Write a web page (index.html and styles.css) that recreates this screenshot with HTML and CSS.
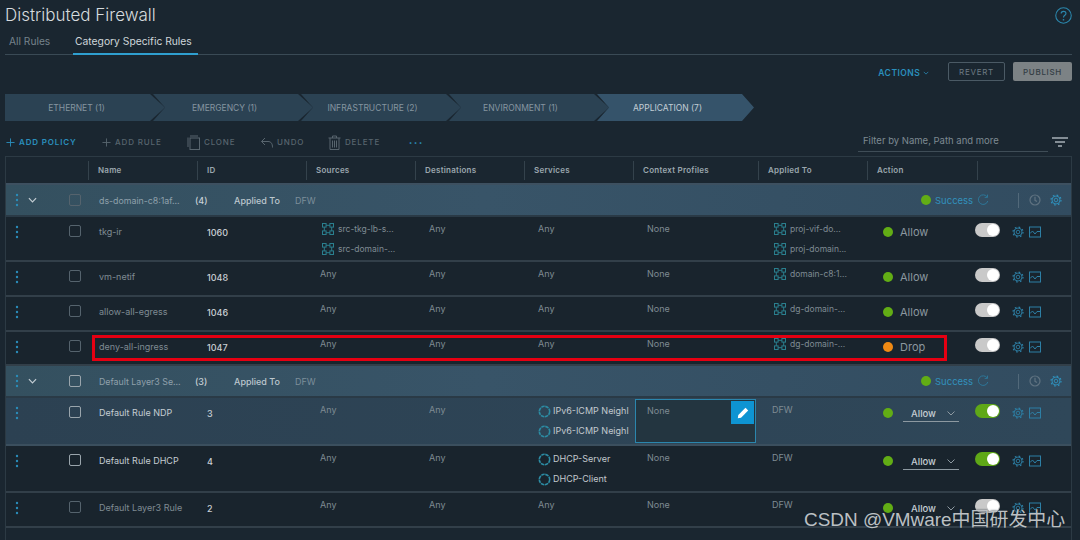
FILE: index.html
```html
<!DOCTYPE html>
<html lang="en">
<head>
<meta charset="utf-8">
<title>Distributed Firewall</title>
<link rel="stylesheet" href="styles.css">
</head>
<body>
<svg class="defs" width="0" height="0" aria-hidden="true">
  <symbol id="i-kebab" viewBox="0 0 4 14"><circle cx="2" cy="2" r="1.2"/><circle cx="2" cy="7" r="1.2"/><circle cx="2" cy="12" r="1.2"/></symbol>
  <symbol id="i-group" viewBox="0 0 12 12"><g fill="none" stroke="currentColor" stroke-width="1"><rect x=".5" y=".5" width="3.6" height="3.6"/><rect x="7.900" y=".5" width="3.6" height="3.6"/><rect x=".5" y="7.900" width="3.6" height="3.6"/><rect x="7.900" y="7.900" width="3.6" height="3.6"/><path d="M4.100 2.300h3.800M4.100 9.700h3.800M2.300 4.100v3.800M9.700 4.100v3.800"/></g></symbol>
  <symbol id="i-gear" viewBox="0 0 12 12"><g fill="none" stroke="currentColor"><circle cx="6" cy="6" r="4" stroke-width=".9"/><circle cx="6" cy="6" r="5" stroke-width="1.200" stroke-dasharray="1.700 2.230"/><circle cx="6" cy="6" r="1.800" stroke-width=".9"/></g></symbol>
  <symbol id="i-chart" viewBox="0 0 12 11"><g fill="none" stroke="currentColor" stroke-width="1"><rect x=".5" y=".5" width="11" height="10"/><path d="M1 7 3.500 4.500 6 7.500 8 5h3"/></g></symbol>
  <symbol id="i-svc" viewBox="0 0 12 12"><circle cx="6" cy="6" r="4.800" fill="none" stroke="currentColor" stroke-width="1.500" stroke-dasharray="3.200 .6"/></symbol>
  <symbol id="i-refresh" viewBox="0 0 12 12"><g fill="none" stroke="currentColor" stroke-width="1"><path d="M10.200 3A4.800 4.800 0 1 0 10.800 7"/><path d="M10.500 .6V3.400H7.700"/></g></symbol>
  <symbol id="i-history" viewBox="0 0 12 12"><g fill="none" stroke="currentColor" stroke-width="1.200"><circle cx="6" cy="6" r="5"/><path d="M6 2.800V6.300L8 7.600"/></g></symbol>
  <symbol id="i-plus" viewBox="0 0 10 10"><path d="M5 .5v9M.5 5h9" fill="none" stroke="currentColor" stroke-width="1"/></symbol>
</svg>

<header class="title-bar">
  <h1 class="title">Distributed Firewall</h1>
  <svg class="help" viewBox="0 0 16 16"><circle cx="8" cy="8" r="7.300" fill="none" stroke="currentColor" stroke-width="1"/><path d="M5.800 6.200C5.800 3.400 10.300 3.400 10.300 6c0 1.800-2.300 1.800-2.300 3.800" fill="none" stroke="currentColor" stroke-width="1.100"/><circle cx="8" cy="12" r=".8" fill="currentColor"/></svg>
</header>

<nav class="tabs">
  <span class="tab">All Rules</span>
  <span class="tab tab-active">Category Specific Rules</span>
</nav>

<div class="actions-bar">
  <span class="actions-link">ACTIONS <svg class="chev-mini" viewBox="0 0 8 5"><path d="M1 1l3 3 3-3" fill="none" stroke="currentColor" stroke-width="1"/></svg></span>
  <span class="btn btn-outline">REVERT</span>
  <span class="btn btn-solid">PUBLISH</span>
</div>

<div class="stepper">
  <span class="step step-first">ETHERNET (1)</span>
  <span class="step">EMERGENCY (1)</span>
  <span class="step">INFRASTRUCTURE (2)</span>
  <span class="step">ENVIRONMENT (1)</span>
  <span class="step step-current">APPLICATION (7)</span>
</div>

<div class="toolbar">
  <span class="tool tool-primary"><svg class="ico-plus"><use href="#i-plus"/></svg>ADD POLICY</span>
  <span class="tool t-rule"><svg class="ico-plus"><use href="#i-plus"/></svg>ADD RULE</span>
  <span class="tool t-clone"><svg class="ico-tool" viewBox="0 0 13 15"><path d="M3 1h8M1 2.500V12" fill="none" stroke="currentColor"/><rect x="3" y="3" width="9.500" height="11.500" fill="none" stroke="currentColor"/></svg>CLONE</span>
  <span class="tool t-undo"><svg class="ico-tool" viewBox="0 0 13 15"><path d="M5 3 1.500 6.500 5 10M1.500 6.500H8c3 0 4.500 2 4.500 6" fill="none" stroke="currentColor"/></svg>UNDO</span>
  <span class="tool t-delete"><svg class="ico-tool" viewBox="0 0 13 15"><path d="M.5 3h12M4.500 3V1h4v2M2 3v11.500h9V3M4.500 5.500v7M6.500 5.500v7M8.500 5.500v7" fill="none" stroke="currentColor"/></svg>DELETE</span>
  <span class="tool-more">•••</span>
  <span class="filter">Filter by Name, Path and more</span>
  <svg class="filter-ico" viewBox="0 0 16 10"><path d="M0 1h16M3 5h10M6 9h4" fill="none" stroke="currentColor" stroke-width="1.600"/></svg>
</div>

<main class="table">
  <div class="row head">
    <div class="hc"></div>
    <div class="hc">Name</div>
    <div class="hc">ID</div>
    <div class="hc">Sources</div>
    <div class="hc">Destinations</div>
    <div class="hc">Services</div>
    <div class="hc">Context Profiles</div>
    <div class="hc">Applied To</div>
    <div class="hc">Action</div>
    <div class="hc"></div>
  </div>

  <div class="group">
    <svg class="kebab"><use href="#i-kebab"/></svg>
    <svg class="chev" viewBox="0 0 10 6"><path d="M1 1l4 4 4-4" fill="none" stroke="currentColor" stroke-width="1.300"/></svg>
    <span class="box"></span>
    <span class="g-name">ds-domain-c8:1af...</span>
    <span class="g-count">(4)</span>
    <span class="g-applied">Applied To</span>
    <span class="g-dfw">DFW</span>
    <span class="g-right">
      <span class="dot dot-green"></span><span class="g-status">Success</span>
      <svg class="ico g-refresh"><use href="#i-refresh"/></svg>
      <span class="g-sep"></span>
      <svg class="ico g-history"><use href="#i-history"/></svg>
      <svg class="ico g-gear"><use href="#i-gear"/></svg>
    </span>
  </div>

  <div class="row rule r44">
    <div class="ctl"><svg class="kebab"><use href="#i-kebab"/></svg><span class="box"></span></div>
    <div class="name">tkg-ir</div>
    <div class="id">1060</div>
    <div class="cell src"><div class="item"><svg class="ico-g"><use href="#i-group"/></svg>src-tkg-lb-s...</div><div class="item"><svg class="ico-g"><use href="#i-group"/></svg>src-domain-...</div></div>
    <div class="cell">Any</div>
    <div class="cell">Any</div>
    <div class="cell">None</div>
    <div class="cell app"><div class="item"><svg class="ico-g"><use href="#i-group"/></svg>proj-vif-do...</div><div class="item"><svg class="ico-g"><use href="#i-group"/></svg>proj-domain...</div></div>
    <div class="act"><span class="dot dot-green"></span>Allow</div>
    <div class="tail"><span class="toggle"></span><svg class="ico r-gear"><use href="#i-gear"/></svg><svg class="ico r-chart"><use href="#i-chart"/></svg></div>
  </div>

  <div class="row rule r34">
    <div class="ctl"><svg class="kebab"><use href="#i-kebab"/></svg><span class="box"></span></div>
    <div class="name">vm-netif</div>
    <div class="id">1048</div>
    <div class="cell src">Any</div>
    <div class="cell">Any</div>
    <div class="cell">Any</div>
    <div class="cell">None</div>
    <div class="cell app"><div class="item"><svg class="ico-g"><use href="#i-group"/></svg>domain-c8:1...</div></div>
    <div class="act"><span class="dot dot-green"></span>Allow</div>
    <div class="tail"><span class="toggle"></span><svg class="ico r-gear"><use href="#i-gear"/></svg><svg class="ico r-chart"><use href="#i-chart"/></svg></div>
  </div>

  <div class="row rule r34">
    <div class="ctl"><svg class="kebab"><use href="#i-kebab"/></svg><span class="box"></span></div>
    <div class="name">allow-all-egress</div>
    <div class="id">1046</div>
    <div class="cell src">Any</div>
    <div class="cell">Any</div>
    <div class="cell">Any</div>
    <div class="cell">None</div>
    <div class="cell app"><div class="item"><svg class="ico-g"><use href="#i-group"/></svg>dg-domain-...</div></div>
    <div class="act"><span class="dot dot-green"></span>Allow</div>
    <div class="tail"><span class="toggle"></span><svg class="ico r-gear"><use href="#i-gear"/></svg><svg class="ico r-chart"><use href="#i-chart"/></svg></div>
  </div>

  <div class="row rule r33">
    <div class="ctl"><svg class="kebab"><use href="#i-kebab"/></svg><span class="box"></span></div>
    <div class="name">deny-all-ingress</div>
    <div class="id">1047</div>
    <div class="cell src">Any</div>
    <div class="cell">Any</div>
    <div class="cell">Any</div>
    <div class="cell">None</div>
    <div class="cell app"><div class="item"><svg class="ico-g"><use href="#i-group"/></svg>dg-domain-...</div></div>
    <div class="act"><span class="dot dot-orange"></span>Drop</div>
    <div class="tail"><span class="toggle"></span><svg class="ico r-gear"><use href="#i-gear"/></svg><svg class="ico r-chart"><use href="#i-chart"/></svg></div>
  </div>

  <div class="group">
    <svg class="kebab"><use href="#i-kebab"/></svg>
    <svg class="chev" viewBox="0 0 10 6"><path d="M1 1l4 4 4-4" fill="none" stroke="currentColor" stroke-width="1.300"/></svg>
    <span class="box box-bright"></span>
    <span class="g-name">Default Layer3 Se...</span>
    <span class="g-count">(3)</span>
    <span class="g-applied">Applied To</span>
    <span class="g-dfw">DFW</span>
    <span class="g-right">
      <span class="dot dot-green"></span><span class="g-status">Success</span>
      <svg class="ico g-refresh"><use href="#i-refresh"/></svg>
      <span class="g-sep"></span>
      <svg class="ico g-history"><use href="#i-history"/></svg>
      <svg class="ico g-gear"><use href="#i-gear"/></svg>
    </span>
  </div>

  <div class="row rule r47 selected">
    <div class="ctl"><svg class="kebab"><use href="#i-kebab"/></svg><span class="box box-bright"></span></div>
    <div class="name name-bright">Default Rule NDP</div>
    <div class="id">3</div>
    <div class="cell">Any</div>
    <div class="cell">Any</div>
    <div class="cell svc"><div class="item"><svg class="ico-s"><use href="#i-svc"/></svg>IPv6-ICMP Neighl</div><div class="item"><svg class="ico-s"><use href="#i-svc"/></svg>IPv6-ICMP Neighl</div></div>
    <div class="cell edit">None<span class="pencil"><svg viewBox="0 0 12 12"><path d="M8.500 .8 11.200 3.500 4 10.700.8 11.200 1.300 8z" fill="#fff"/></svg></span></div>
    <div class="cell app">DFW</div>
    <div class="act act-select"><span class="dot dot-green"></span><span class="select">Allow<svg class="sel-chev" viewBox="0 0 8 5"><path d="M.5.500 4 4 7.500.500" fill="none" stroke="currentColor"/></svg></span></div>
    <div class="tail"><span class="toggle toggle-on"></span><svg class="ico r-gear"><use href="#i-gear"/></svg><svg class="ico r-chart"><use href="#i-chart"/></svg></div>
  </div>

  <div class="row rule r46">
    <div class="ctl"><svg class="kebab"><use href="#i-kebab"/></svg><span class="box box-bright"></span></div>
    <div class="name name-bright">Default Rule DHCP</div>
    <div class="id">4</div>
    <div class="cell">Any</div>
    <div class="cell">Any</div>
    <div class="cell svc"><div class="item"><svg class="ico-s"><use href="#i-svc"/></svg>DHCP-Server</div><div class="item"><svg class="ico-s"><use href="#i-svc"/></svg>DHCP-Client</div></div>
    <div class="cell">None</div>
    <div class="cell app">DFW</div>
    <div class="act act-select"><span class="dot dot-green"></span><span class="select">Allow<svg class="sel-chev" viewBox="0 0 8 5"><path d="M.5.500 4 4 7.500.500" fill="none" stroke="currentColor"/></svg></span></div>
    <div class="tail"><span class="toggle toggle-on"></span><svg class="ico r-gear"><use href="#i-gear"/></svg><svg class="ico r-chart"><use href="#i-chart"/></svg></div>
  </div>

  <div class="row rule r35">
    <div class="ctl"><svg class="kebab"><use href="#i-kebab"/></svg><span class="box"></span></div>
    <div class="name">Default Layer3 Rule</div>
    <div class="id">2</div>
    <div class="cell">Any</div>
    <div class="cell">Any</div>
    <div class="cell">Any</div>
    <div class="cell">None</div>
    <div class="cell app">DFW</div>
    <div class="act act-select"><span class="dot dot-green"></span><span class="select select-plain">Allow<svg class="sel-chev" viewBox="0 0 8 5"><path d="M.5.500 4 4 7.500.500" fill="none" stroke="currentColor"/></svg></span></div>
    <div class="tail"><span class="toggle"></span><svg class="ico r-gear"><use href="#i-gear"/></svg><svg class="ico r-chart"><use href="#i-chart"/></svg></div>
  </div>
</main>

<div class="annotation"></div>
<div class="watermark">CSDN @VMware中国研发中心</div>
</body>
</html>
```

FILE: styles.css
```css
* { box-sizing: border-box; }
html, body { height: 540px; overflow: hidden; }
body {
  margin: 0;
  padding: 0 8px 0 5px;
  background: #1a2630;
  color: #8f9ba3;
  font-family: Inter, "Noto Sans", sans-serif;
  font-size: 9px;
  position: relative;
}
.defs { position: absolute; }

.title-bar { height: 30px; display: flex; align-items: center; justify-content: space-between; }
.title { margin: 0; font-size: 17px; font-weight: 300; color: #d6dbde; }
.help { width: 17px; height: 17px; color: #2b87ad; }

.tabs {
  height: 25px;
  display: flex;
  align-items: stretch;
  border-bottom: 1px solid #3a4a55;
}
.tab { padding: 5px 0 0 4px; font-size: 10.200px; color: #76838c; width: 68px; }
.tab-active { width: 125px; padding: 5px 0 0 2px; font-size: 10.300px; white-space: nowrap; color: #cfd6db; border-bottom: 2px solid #2f9fd0; margin-bottom: -1px; }

.actions-bar {
  height: 22px;
  margin-top: 7px;
  display: flex;
  justify-content: flex-end;
  align-items: stretch;
}
.actions-link { align-self: center; font-size: 8.500px; font-weight: 600; letter-spacing: .5px; color: #2a8fbd; margin-right: 19px; }
.chev-mini { width: 6px; height: 4px; vertical-align: 1px; }
.btn { display: flex; align-items: center; justify-content: center; font-size: 8px; letter-spacing: .7px; border-radius: 2px; }
.btn-outline { width: 57px; border: 1px solid #4b5a65; color: #6d7a83; margin-right: 8px; height: 19px; }
.btn-solid { width: 59px; height: 19px; background: #7c8285; color: #333d44; font-weight: 500; }

.stepper { display: flex; margin-top: 10px; height: 27px; }
.step {
  width: 160px;
  margin-left: -12px;
  padding-right: 17px;
  display: flex;
  align-items: center;
  justify-content: center;
  background: #2b4253;
  color: #8595a0;
  font-size: 8.500px;
  clip-path: polygon(0 0, calc(100% - 15px) 0, 100% 50%, calc(100% - 15px) 100%, 0 100%, 12px 50%);
}
.step-first { margin-left: 0; clip-path: polygon(0 0, calc(100% - 15px) 0, 100% 50%, calc(100% - 15px) 100%, 0 100%); }
.step-current { background: #35536a; color: #c3ced6; width: 157px; padding-right: 16px; clip-path: polygon(0 0, calc(100% - 12px) 0, 100% 50%, calc(100% - 12px) 100%, 0 100%, 12px 50%); }

.toolbar { display: flex; align-items: center; height: 20px; margin-top: 11px; font-size: 8px; letter-spacing: .85px; color: #58656e; font-weight: 500; }
.tool { display: flex; align-items: center; gap: 4px; }
.tool-primary { color: #2a8fbd; font-weight: 600; width: 96px; margin-left: 1px; }
.ico-plus { width: 9px; height: 9px; }
.ico-tool { width: 13px; height: 15px; }
.t-rule { width: 85px; }
.t-clone { width: 73px; }
.t-undo { width: 68px; }
.t-delete { width: 81px; }
.tool-more { color: #2a8fbd; font-size: 6px; letter-spacing: 1.800px; }
.filter {
  margin-left: auto;
  width: 190px;
  height: 20px;
  padding: 3px 0 0 5px;
  border-bottom: 1px solid #3f4d57;
  color: #7e8a92;
  font-size: 9.500px;
  font-weight: 400;
  letter-spacing: 0;
}
.filter-ico { width: 16px; height: 10px; color: #a7b0b6; margin: 0 4px 0 4px; }

.table {
  margin-top: 4px;
  height: 400px;
  width: 1067px;
  border: 1px solid #2c3a44;
  border-bottom: 0;
}
.row {
  display: grid;
  grid-template-columns: 82px 109px 109px 109px 109px 109px 125px 109px 110px 94px;
}
.head { height: 28px; align-items: center; background: #1a2630; border-bottom: 2px solid #3d5060; }
.hc { height: 19px; line-height: 19px; border-left: 1px solid #34424c; padding-left: 9px; font-size: 8px; font-weight: 600; letter-spacing: .25px; color: #9aa6ae; }
.hc:first-child { border-left: 0; }

.group {
  height: 32px;
  display: flex;
  align-items: center;
  background: linear-gradient(90deg, #34505f, #385468 45%, #324c60);
  border-bottom: 2px solid #2a3a46;
  color: #8fa0ab;
  font-size: 9px;
}
.kebab { width: 4px; height: 14px; fill: #2b8cb8; margin-left: 9px; flex: none; }
.chev { width: 9px; height: 6px; color: #c4ced4; margin-left: 9px; flex: none; }
.group .box { margin-left: 32px; }
.box { width: 12px; height: 12px; flex: none; border: 1px solid #55636d; border-radius: 2px; }
.box-bright { border-color: #9aa5ac; }
.g-name { margin-left: 18px; width: 96px; white-space: nowrap; font-size: 8.800px; }
.g-count { width: 39px; color: #c7d0d6; font-weight: 500; }
.g-applied { width: 61px; color: #bcc7ce; font-weight: 500; }
.g-dfw { color: #7c8e9a; }
.g-right { margin-left: auto; display: flex; align-items: center; margin-right: 9px; }
.g-status { color: #3291bd; margin-left: 4px; width: 42px; font-size: 9.500px; }
.ico { width: 12px; height: 12px; flex: none; }
.g-refresh { color: #2d7698; }
.g-sep { width: 1px; height: 15px; background: #52697a; margin: 0 10px 0 29px; }
.g-history { color: #5f7280; }
.g-gear { color: #2f90bb; margin-left: 9px; }

.rule { border-bottom: 2px solid #323f49; background: #19242d; color: #7f8b93; font-size: 9px; }
.r44 { height: 45px; }
.r34 { height: 35px; }
.r33 { height: 34px; }
.r47 { height: 48px; }
.r46 { height: 47px; }
.r35 { height: 35px; }
.selected { background: linear-gradient(90deg, #2c4152, #2f4759); border-bottom-color: #3b4f5e; }

.ctl { display: flex; align-items: flex-start; padding-top: 8px; }
.ctl .box { margin-left: 50px; }
.name { padding: 9px 0 0 11px; line-height: 12px; white-space: nowrap; }
.name-bright { color: #c4ccd2; }
.id { padding: 10px 0 0 10px; line-height: 12px; color: #c9cfd4; font-weight: 500; }
.cell { padding: 6px 0 0 14px; line-height: 12px; }
.src .item, .app .item { margin-left: 2px; font-size: 8.500px; }
.item { display: flex; align-items: center; gap: 4px; height: 12px; margin-bottom: 8px; white-space: nowrap; }
.ico-g { width: 12px; height: 12px; color: #2a7f8e; flex: none; }
.svc { color: #c2c9ce; padding-top: 7px; }
.svc .item { gap: 2px; }
.ico-s { width: 13px; height: 13px; color: #2c8ba3; flex: none; }
.edit { position: relative; margin: 1px 2px 2px; padding: 5px 0 0 11px; border: 1px solid #2b86ad; background: #233540; }
.pencil { position: absolute; top: 1px; right: 1px; width: 23px; height: 23px; background: #0e94d2; display: flex; align-items: center; justify-content: center; }
.pencil svg { width: 12px; height: 12px; }
.act { display: flex; align-items: center; gap: 7px; height: 30px; padding-left: 16px; font-size: 11px; color: #8b979f; }
.dot { width: 10px; height: 10px; border-radius: 50%; flex: none; }
.dot-green { background: #62ad15; }
.dot-orange { background: #f08a14; }
.act-select { gap: 10px; font-size: 9.500px; font-weight: 500; color: #c4ccd2; }
.select {
  width: 56px;
  height: 16px;
  display: flex;
  align-items: center;
  justify-content: space-between;
  padding: 0 4px 0 8px;
  border-bottom: 1px solid #8d99a1;
  margin-top: 1px;
}
.select-plain { border-bottom: 0; }
.sel-chev { width: 8px; height: 5px; color: #8d99a1; }
.tail { display: flex; align-items: flex-start; padding-top: 6px; }
.toggle { width: 25px; height: 14px; border-radius: 7px; background: #c9c9c9; position: relative; flex: none; margin-left: -2px; }
.toggle::after { content: ""; position: absolute; right: 1px; top: 1px; width: 12px; height: 12px; border-radius: 50%; background: #fff; }
.toggle-on { background: #5fa817; }
.r-gear { color: #2d7fa5; margin: 3px 0 0 12px; }
.r-chart { color: #2d7fa5; margin: 3px 0 0 5px; }

.annotation { position: absolute; left: 92px; top: 335px; width: 855px; height: 26px; border: 3px solid #e60012; }
.watermark {
  position: absolute;
  left: 804px;
  top: 509px;
  font-family: "Liberation Sans", "Noto Sans CJK SC", sans-serif;
  font-size: 18.950px;
  line-height: 22px;
  color: #bcc0c3;
  white-space: nowrap;
  text-shadow: 0 0 2px #1a2630;
}
```
